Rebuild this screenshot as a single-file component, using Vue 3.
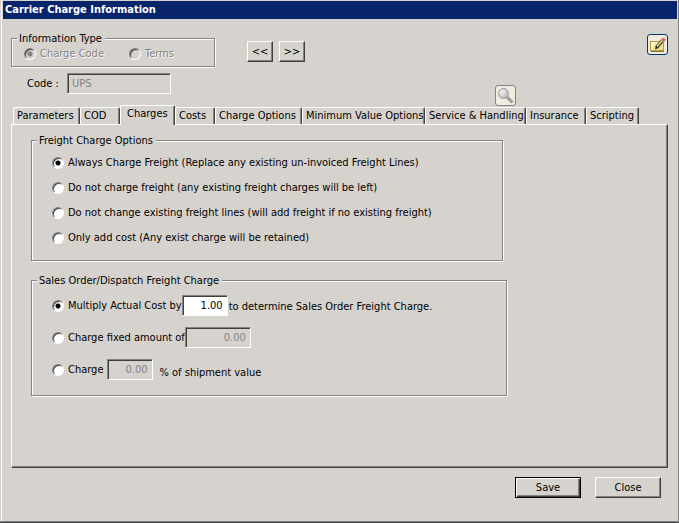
<script setup>
import { ref } from 'vue'

const tabs = [
  'Parameters',
  'COD',
  'Charges',
  'Costs',
  'Charge Options',
  'Minimum Value Options',
  'Service & Handling',
  'Insurance',
  'Scripting',
]
const activeTab = ref('Charges')

const infoType = ref('code')
const code = ref('UPS')

const freightOptions = [
  'Always Charge Freight (Replace any existing un-invoiced Freight Lines)',
  'Do not charge freight (any existing freight charges will be left)',
  'Do not change existing freight lines (will add freight if no existing freight)',
  'Only add cost (Any exist charge will be retained)',
]
const freightOption = ref(0)

const chargeMode = ref('multiply')
const multiplier = ref('1.00')
const fixedAmount = ref('0.00')
const percent = ref('0.00')
</script>

<template>
  <main class="window">
    <h1 class="title">Carrier Charge Information</h1>

    <div class="body">
      <header class="top">
        <fieldset class="group type-group" disabled>
          <legend>Information Type</legend>
          <div class="type-row">
            <label class="choice"><input v-model="infoType" type="radio" name="info" value="code" />Charge Code</label>
            <label class="choice"><input v-model="infoType" type="radio" name="info" value="terms" />Terms</label>
          </div>
        </fieldset>
        <div class="nav">
          <button class="btn small" type="button" aria-label="Previous">&lt;&lt;</button>
          <button class="btn small" type="button" aria-label="Next">&gt;&gt;</button>
        </div>
        <button class="icon-btn note" type="button" aria-label="Notes">
          <svg viewBox="0 0 17 17" width="17" height="17">
            <defs>
              <linearGradient id="paper" x1="0" y1="0" x2="1" y2="1">
                <stop offset="0" stop-color="#fffbd6" />
                <stop offset="1" stop-color="#f2da70" />
              </linearGradient>
            </defs>
            <rect x="1.5" y="5.5" width="13" height="9" fill="url(#paper)" stroke="#b09a4c" />
            <path d="M2 15.5H15" fill="none" stroke="#8a7430" />
            <path d="M7.500 11.500L13.500 4.500" stroke="#4a4636" stroke-width="3.500" />
            <path d="M8 10.500L13.500 4" stroke="#f3d777" stroke-width="1.500" />
            <path d="M12.200 3.500L14 1.500L16.800 3.500L15 6Z" fill="#d9665a" />
            <path d="M11.800 3.800L14.800 6.300" stroke="#a9b4bd" stroke-width="1" />
            <path d="M6 13.500L6.800 10L9 12Z" fill="#222" />
          </svg>
        </button>
      </header>

      <div class="code-row">
        <label for="code">Code :</label>
        <input id="code" v-model="code" class="field code-field" type="text" disabled />
        <button class="icon-btn search" type="button" aria-label="Search" disabled>
          <svg viewBox="0 0 17 17" width="17" height="17">
            <defs>
              <radialGradient id="lens" cx="0.35" cy="0.35" r="0.7">
                <stop offset="0" stop-color="#f4f4f4" />
                <stop offset="1" stop-color="#b4b4b4" />
              </radialGradient>
            </defs>
            <path d="M10 10L15.500 15.500" stroke="#8c8c8c" stroke-width="3" />
            <path d="M10.500 10L15.500 15" stroke="#c4c4c4" stroke-width="1" />
            <circle cx="6.500" cy="6.500" r="5" fill="url(#lens)" stroke="#9c9c9c" />
          </svg>
        </button>
      </div>

      <nav class="tabs" role="tablist">
        <button
          v-for="tab in tabs"
          :key="tab"
          type="button"
          role="tab"
          class="tab"
          :class="{ active: tab === activeTab }"
          :aria-selected="tab === activeTab"
          @click="activeTab = tab"
        >{{ tab }}</button>
      </nav>

      <section class="panel" role="tabpanel">
        <fieldset class="group options">
          <legend>Freight Charge Options</legend>
          <div class="option-list">
            <label v-for="(text, i) in freightOptions" :key="i" class="choice">
              <input v-model="freightOption" type="radio" name="freight" :value="i" />{{ text }}
            </label>
          </div>
        </fieldset>

        <fieldset class="group charge">
          <legend>Sales Order/Dispatch Freight Charge</legend>
          <div class="charge-list">
            <div class="charge-row">
              <label class="choice"><input v-model="chargeMode" type="radio" name="mode" value="multiply" />Multiply Actual Cost by</label>
              <input v-model="multiplier" class="field num" type="text" aria-label="Cost multiplier" />
              <span>to determine Sales Order Freight Charge.</span>
            </div>
            <div class="charge-row">
              <label class="choice"><input v-model="chargeMode" type="radio" name="mode" value="fixed" />Charge fixed amount of</label>
              <input v-model="fixedAmount" class="field num wide" type="text" aria-label="Fixed amount" disabled />
            </div>
            <div class="charge-row spaced">
              <label class="choice"><input v-model="chargeMode" type="radio" name="mode" value="percent" />Charge</label>
              <input v-model="percent" class="field num" type="text" aria-label="Percent of shipment value" disabled />
              <span class="suffix">% of shipment value</span>
            </div>
          </div>
        </fieldset>
      </section>

      <footer class="actions">
        <button class="btn default" type="button">Save</button>
        <button class="btn" type="button">Close</button>
      </footer>
    </div>
  </main>
</template>

<style>
body {
  background: #d6d3ce;
}
</style>

<style scoped>
.window {
  display: flex;
  flex-direction: column;
  box-sizing: border-box;
  min-height: 100vh;
  padding: 1px 2px 1px 3px;
  background: #d6d3ce;
  box-shadow: inset 0 -1px 0 #404040, inset -1px -2px 0 #848284, inset 1px 0 0 #d6d3ce, inset 2px 0 0 #fff;
  color: #000;
  font: 11px/14px 'DejaVu Sans Condensed', 'DejaVu Sans', sans-serif;
}
.title {
  margin: 0;
  padding-left: 2px;
  background: #08246b;
  color: #fff;
  font-size: 11px;
  font-weight: bold;
  line-height: 18px;
}
.body {
  display: flex;
  flex: 1;
  flex-direction: column;
  padding: 11px 9px 24px 8px;
}
button,
input {
  box-sizing: border-box;
  margin: 0;
  color: inherit;
  font: inherit;
}
.top {
  display: flex;
  align-items: flex-start;
}
.group {
  box-sizing: border-box;
  min-width: 0;
  margin: 0;
  padding: 0;
  border: 1px solid #848284;
  box-shadow: 1px 1px 0 #fff, inset 1px 1px 0 #fff;
}
.group legend {
  margin-left: 5px;
  padding: 2px 3px 0 2px;
  background: #d6d3ce;
}
.type-group {
  width: 204px;
}
.type-row {
  display: flex;
  gap: 25px;
  padding: 1px 0 5px 12px;
}
.choice {
  display: flex;
  align-items: center;
  gap: 4px;
  white-space: nowrap;
}
.choice input {
  flex: none;
  width: 12px;
  height: 12px;
  appearance: none;
  border: 1px solid;
  border-color: #848284 #fff #fff #848284;
  border-radius: 50%;
  background: #fff;
  box-shadow: inset 1px 1px 0 #404040;
}
.choice input:checked {
  background: radial-gradient(circle, #000 2px, #fff 3px);
}
.group:disabled .choice {
  color: #848284;
  text-shadow: 1px 1px 0 #fff;
}
.group:disabled .choice input {
  background: #d6d3ce;
}
.group:disabled .choice input:checked {
  background: radial-gradient(circle, #848284 2px, #d6d3ce 3px);
}
.nav {
  display: flex;
  gap: 6px;
  margin: 11px 0 0 32px;
}
.btn {
  width: 66px;
  height: 21px;
  padding: 0;
  border: 1px solid;
  border-color: #fff #404040 #404040 #fff;
  background: #d6d3ce;
  box-shadow: inset -1px -1px 0 #848284;
}
.btn.small {
  width: 26px;
}
.btn.default {
  border-color: #000;
  box-shadow: inset 1px 1px 0 #fff, inset -1px -1px 0 #404040, inset -2px -2px 0 #848284;
}
.icon-btn {
  display: grid;
  place-items: center;
  width: 21px;
  height: 21px;
  padding: 0;
  border: 1px solid #003c74;
  border-radius: 3px;
  background: #f0ece0;
}
.note {
  margin: 4px 0 0 auto;
}
.search {
  margin: 12px 0 0 324px;
  border-color: #848284;
}
.code-row {
  display: flex;
  align-items: flex-start;
  margin-top: 6px;
  padding-left: 16px;
}
.code-row label {
  width: 40px;
  padding-top: 4px;
}
.field {
  height: 21px;
  padding: 0 4px;
  border: 1px solid;
  border-color: #848284 #fff #fff #848284;
  border-radius: 0;
  background: #fff;
  box-shadow: inset 1px 1px 0 #404040;
}
.field:disabled {
  background: #d6d3ce;
  color: #848284;
}
.code-field {
  width: 104px;
}
.tabs {
  display: grid;
  grid-template-columns: 67px 40px 55px 40px 87px 123px 101px 60px 53px;
  align-items: end;
  padding: 1px 0 0 2px;
}
.tab {
  height: 17px;
  padding: 0 0 0 3px;
  border: 1px solid;
  border-color: #fff #404040 transparent #fff;
  border-bottom: 0;
  border-radius: 2px 2px 0 0;
  background: #d6d3ce;
  box-shadow: inset -1px 0 0 #848284;
  text-align: left;
  white-space: nowrap;
}
.tab.active {
  z-index: 1;
  height: 20px;
  margin: -2px 0 -1px;
  padding: 0 0 3px 6px;
}
.panel {
  display: flex;
  flex: 1;
  flex-direction: column;
  gap: 11px;
  padding: 7px 19px;
  border: 1px solid;
  border-color: #fff #404040 #404040 #fff;
  box-shadow: inset -1px -1px 0 #848284;
}
.options {
  max-width: 472px;
}
.charge {
  max-width: 476px;
}
.option-list {
  display: grid;
  gap: 11px;
  padding: 8px 20px 15px;
}
.charge-list {
  display: grid;
  gap: 11px;
  padding: 7px 20px 15px;
}
.charge-row {
  display: flex;
  align-items: center;
}
.charge-row.spaced {
  gap: 3px;
}
.charge-row span {
  padding: 2px 0 0 1px;
}
.num {
  width: 46px;
  text-align: right;
}
.wide {
  width: 66px;
}
.charge-row .suffix {
  padding: 7px 0 0 4px;
}
.actions {
  display: flex;
  justify-content: flex-end;
  gap: 14px;
  padding: 9px 7px 0 0;
}
</style>
